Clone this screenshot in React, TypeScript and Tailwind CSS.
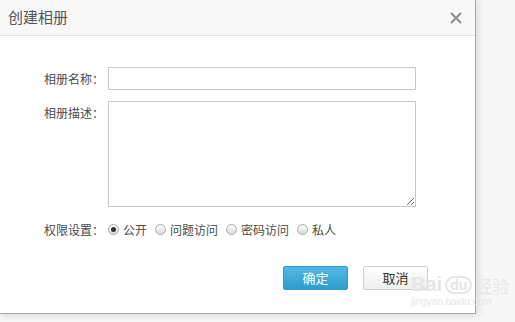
const font = { fontFamily: '"Microsoft YaHei", "Noto Sans CJK SC", "Noto Sans", sans-serif' };

function Radio({ label, checked }: { label: string; checked?: boolean }) {
  return (
    <label className="flex items-center gap-[4px] mr-[8px]">
      <span className="w-[11px] h-[11px] rounded-full border border-[#a9a9a9] bg-gradient-to-b from-[#fdfdfd] to-[#dcdcdc] flex items-center justify-center">
        {checked && <span className="w-[5px] h-[5px] rounded-full bg-[#333]" />}
      </span>
      <span>{label}</span>
    </label>
  );
}

export default function App() {
  return (
    <div className="w-[515px] h-[322px] bg-[#f7f7f7] relative overflow-hidden text-[#4a4a4a]" style={font}>
      <div className="w-[476px] h-[314px] bg-white border-r border-b border-[#a8a8a8] shadow-[2px_2px_8px_rgba(0,0,0,0.12)] flex flex-col">
        <div className="h-[36px] bg-[#f8f8f8] border-b border-[#e4e4e4] flex items-center justify-between pl-[8px] pr-[13px]">
          <span className="text-[15px] text-[#555]">创建相册</span>
          <svg width="12" height="12" viewBox="0 0 12 12" className="text-[#8a8a8a]">
            <path d="M1 1L11 11M11 1L1 11" stroke="currentColor" strokeWidth="1.8" />
          </svg>
        </div>

        <div className="pt-[31px] flex flex-col gap-[11px] text-[12px]">
          <div className="flex">
            <span className="w-[105px] text-right leading-[23px] pr-[1px]">相册名称：</span>
            <input className="ml-[3px] w-[308px] h-[23px] border border-[#c9c9c9] outline-none" />
          </div>
          <div className="flex">
            <span className="w-[105px] text-right leading-[23px] pr-[1px]">相册描述：</span>
            <textarea className="ml-[3px] w-[308px] h-[106px] border border-[#c9c9c9] outline-none resize" />
          </div>
          <div className="flex items-center h-[23px]">
            <span className="w-[105px] text-right pr-[1px]">权限设置：</span>
            <div className="flex items-center ml-[3px]">
              <Radio label="公开" checked />
              <Radio label="问题访问" />
              <Radio label="密码访问" />
              <Radio label="私人" />
            </div>
          </div>
        </div>

        <div className="flex justify-end gap-[15px] pr-[47px] mt-[25px] text-[13px]">
          <button className="w-[65px] h-[24px] rounded-[2px] border border-[#2f9bcc] bg-gradient-to-b from-[#52b9e3] to-[#2d9ccf] text-white">
            确定
          </button>
          <button className="w-[65px] h-[24px] rounded-[2px] border border-[#cfcfcf] bg-gradient-to-b from-[#ffffff] to-[#eeeeee] text-[#333]">
            取消
          </button>
        </div>
      </div>

      <div className="absolute left-[411px] top-[274px] text-[#e6e6e6] leading-none pointer-events-none">
        <div className="flex items-end gap-[3px] text-[20px] font-bold" style={{ fontFamily: '"Liberation Sans", sans-serif' }}>
          <span>Bai</span>
          <span className="text-[14px] border-2 border-[#e6e6e6] rounded-full px-[3px]">du</span>
          <span className="text-[17px] font-normal" style={font}>经验</span>
        </div>
        <div className="text-[10px] mt-[3px]" style={{ fontFamily: '"Liberation Sans", sans-serif' }}>jingyan.baidu.com</div>
      </div>
    </div>
  );
}
